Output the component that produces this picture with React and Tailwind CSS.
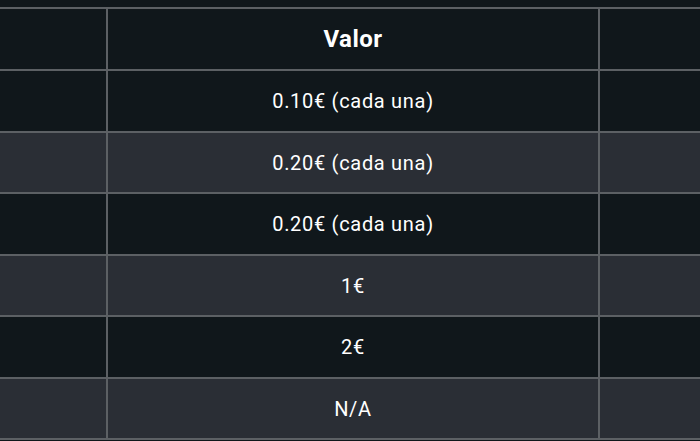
import React from "react";

const rows = [
  { value: "0.10€ (cada una)", h: "h-[62px]", bg: "bg-[#10171b]" },
  { value: "0.20€ (cada una)", h: "h-[61px]", bg: "bg-[#2a2e35]" },
  { value: "0.20€ (cada una)", h: "h-[62px]", bg: "bg-[#10171b]" },
  { value: "1€", h: "h-[61px]", bg: "bg-[#2a2e35]" },
  { value: "2€", h: "h-[62px]", bg: "bg-[#10171b]" },
  { value: "N/A", h: "h-[61px]", bg: "bg-[#2a2e35]" },
];

function Row({ children, h, bg, header }) {
  return (
    <div className={`flex ${h} ${bg} border-b-2 border-[#5c6064]`}>
      <div className="w-[106px] shrink-0" />
      <div
        className={`w-[494px] shrink-0 border-x-2 border-[#5c6064] flex items-center justify-center text-white ${
          header ? "text-[24px] font-bold tracking-[0.02em]" : "text-[20px] tracking-[0.035em]"
        }`}
      >
        {children}
      </div>
      <div className="flex-1" />
    </div>
  );
}

export default function App() {
  return (
    <div
      className="w-[700px] h-[441px] overflow-hidden bg-[#10171b] pt-[7px]"
      style={{ fontFamily: "Roboto, 'Liberation Sans', sans-serif" }}
    >
      <div className="border-t-2 border-[#5c6064]">
        <Row h="h-[62px]" bg="bg-[#10171b]" header>
          Valor
        </Row>
        {rows.map((r, i) => (
          <Row key={i} h={r.h} bg={r.bg}>
            {r.value}
          </Row>
        ))}
      </div>
    </div>
  );
}
